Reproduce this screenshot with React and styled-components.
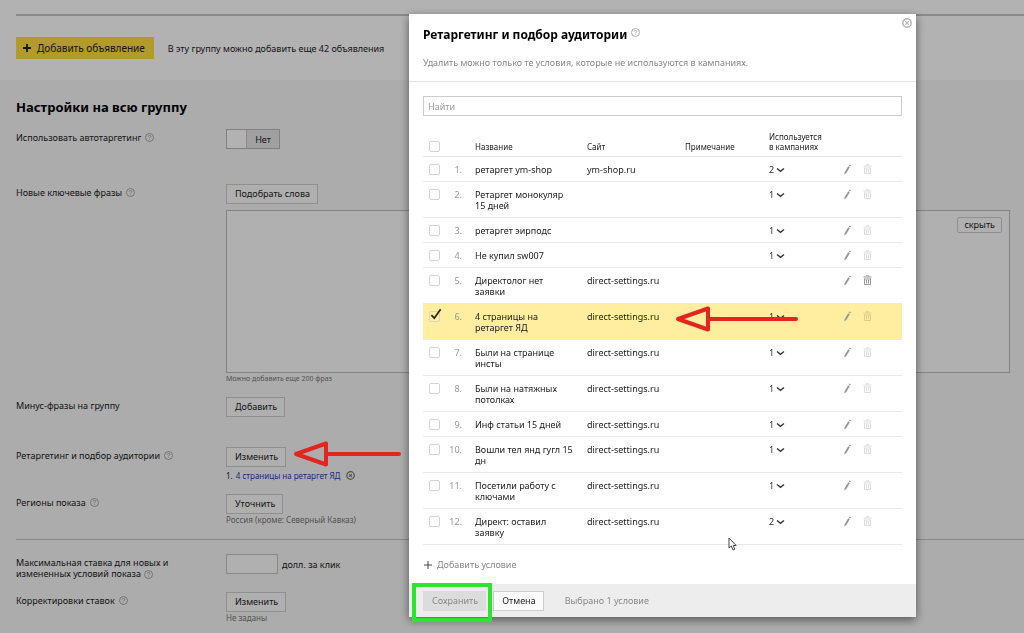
import React, { useState } from "react";
import styled, { createGlobalStyle, css } from "styled-components";

const GlobalStyle = createGlobalStyle`
  * {
    box-sizing: border-box;
  }

  body {
    margin: 0;
    background: #f6f6f6;
    color: #222;
    font-family: "Noto Sans", "Open Sans", sans-serif;
    font-size: 9px;
    line-height: 11px;
  }

  button, input, textarea {
    font: inherit;
    color: inherit;
  }
`;

/* page */

const Page = styled.main`
  min-height: 100vh;
  background: #f6f6f6;
`;

const TopBar = styled.section`
  height: 80px;
  padding: 14px 0 0 16px;
  background: #fff;
`;

const TopBarInner = styled.div`
  display: flex;
  align-items: center;
  gap: 14px;
  padding-top: 21px;
  border-top: 2px solid #c4c4c4;
`;

const AddBannerButton = styled.button`
  display: flex;
  align-items: center;
  gap: 5px;
  height: 22px;
  padding: 0 9px 0 6px;
  border: 0;
  background: #ffdd3e;
  font-size: 10px;
`;

const Section = styled.section`
  padding: 0 0 0 16px;
`;

const SectionTitle = styled.h2`
  margin: 0;
  padding: 17px 0 12px;
  color: #000;
  font-size: 13px;
  font-weight: 700;
  line-height: 20px;
`;

const Field = styled.div`
  display: grid;
  grid-template-columns: 210px 1fr;
  padding-right: 14px;
  min-height: ${({ $height }) => $height}px;
`;

const FieldLabel = styled.div`
  display: flex;
  align-items: flex-start;
  gap: 4px;
  padding-top: 3px;

  svg {
    margin-top: 1px;
  }
`;

const TwoLineLabel = styled.div`
  padding-top: 3px;

  svg {
    margin-left: 3px;
    vertical-align: middle;
  }
`;

const FieldBody = styled.div`
  display: flex;
  flex-direction: column;
  align-items: flex-start;
`;

const Inline = styled.div`
  display: flex;
  align-items: center;
  gap: 4px;
`;

const Button = styled.button`
  height: 20px;
  padding: 0 7px 0 8px;
  border: 1px solid #cdcdcd;
  background: #fbfbfb;
  line-height: 16px;
`;

const Toggle = styled.button`
  display: flex;
  align-items: center;
  height: 20px;
  padding: 0;
  border: 1px solid #b8b8b8;
  background: #e6e6e6;

  &::before {
    content: "";
    width: 19px;
    height: 18px;
    border-right: 1px solid #c8c8c8;
    background: #fff;
  }

  span {
    width: 32px;
    text-align: center;
  }
`;

const PhrasesBox = styled.div`
  position: relative;
  width: 100%;
  margin-top: 6px;
`;

const Phrases = styled.textarea`
  display: block;
  width: 100%;
  height: 163px;
  border: 1px solid #bcbcbc;
  background: #fcfcfc;
  resize: none;
`;

const HideButton = styled.button`
  position: absolute;
  top: 7px;
  right: 8px;
  height: 16px;
  padding: 0 6px;
  border: 1px solid #ccc;
  border-radius: 2px;
  background: #fcfcfc;
  line-height: 12px;
`;

const Hint = styled.div`
  color: #777;
  font-size: ${({ $small }) => ($small ? 7 : 8)}px;
`;

const Condition = styled.div`
  display: flex;
  align-items: center;
  gap: 3px;
  padding-top: 3px;
  font-size: 8px;

  a {
    color: #2c3fa8;
    text-decoration: none;
  }

  button {
    display: flex;
    margin-left: 3px;
    padding: 0;
    border: 0;
    background: none;
    color: #777;
  }
`;

const BidInput = styled.input`
  width: 52px;
  height: 20px;
  border: 1px solid #c4c4c4;
  background: #fcfcfc;
`;

const Divider = styled.hr`
  margin: 0 0 14px;
  border: 0;
  border-top: 1px solid #c4c4c4;
`;

/* dialog */

const Overlay = styled.div`
  position: fixed;
  inset: 0;
  display: flex;
  justify-content: flex-end;
  align-items: flex-start;
  padding: 14px 108px 0 0;
  background: rgba(0, 0, 0, 0.3);
`;

const Dialog = styled.div`
  position: relative;
  width: 507px;
  background: #fff;
  box-shadow: 0 3px 9px rgba(0, 0, 0, 0.5);
`;

const DialogHeader = styled.header`
  padding: 11px 14px 13px;
  border-bottom: 1px solid #e6e6e6;
`;

const DialogTitle = styled.h1`
  display: flex;
  align-items: flex-start;
  gap: 4px;
  margin: 0;
  color: #000;
  font-size: 12px;
  font-weight: 700;
  line-height: 20px;

  svg {
    margin-top: 3px;
  }
`;

const DialogNote = styled.p`
  margin: 12px 0 0;
  color: #888;
`;

const CloseButton = styled.button`
  position: absolute;
  top: 4px;
  right: 4px;
  display: flex;
  padding: 0;
  border: 0;
  background: none;
  color: #b4b4b4;
`;

const DialogBody = styled.div`
  padding: 14px 14px 0;
`;

const Search = styled.input`
  display: block;
  width: 100%;
  height: 20px;
  padding: 0 4px;
  border: 1px solid #ccc;

  &::placeholder {
    color: #999;
    opacity: 1;
  }
`;

const Table = styled.table`
  width: 100%;
  margin-top: 15px;
  border-collapse: separate;
  border-spacing: 0;
  table-layout: fixed;

  th {
    height: 26px;
    padding: 0 0 4px;
    border-bottom: 1px solid #e4e4e4;
    font-size: 8px;
    font-weight: 400;
    line-height: 10px;
    text-align: left;
    vertical-align: bottom;
  }

  td {
    padding: 7px 0 6px;
    border-bottom: 1px solid #e9e9e9;
    vertical-align: top;
  }
`;

const Col = styled.col`
  width: ${({ $width }) => ($width ? `${$width}px` : "auto")};
`;

const Row = styled.tr`
  ${({ $selected }) =>
    $selected &&
    css`
      background: #ffeda0;
    `}
`;

const NumberCell = styled.td`
  color: #999;
  text-align: right;
`;

const NameCell = styled.td`
  && {
    padding-left: 13px;
    padding-right: 12px;
  }
`;

const NameHead = styled.th`
  && {
    padding-left: 13px;
  }
`;

const Check = styled.label`
  position: relative;
  display: flex;
  width: 11px;
  height: 11px;
  margin-left: 6px;

  input {
    width: 11px;
    height: 11px;
    margin: 0;
    border: 1px solid #d4d4d4;
    border-radius: 2px;
    appearance: none;
  }

  svg {
    position: absolute;
    left: 1px;
    bottom: 1px;
    display: none;
  }

  input:checked + svg {
    display: block;
  }
`;

const IconButton = styled.button`
  display: flex;
  padding: 0;
  border: 0;
  background: none;
  color: #999;

  &:disabled {
    color: #dcdcdc;
    mix-blend-mode: multiply;
  }
`;

const UsedButton = styled(IconButton)`
  align-items: center;
  gap: 2px;
  color: #333;
`;

const AddCondition = styled.button`
  display: flex;
  align-items: center;
  gap: 4px;
  margin: 14px 0 14px;
  padding: 0;
  border: 0;
  background: none;
  color: #888;

  svg {
    color: #444;
  }
`;

const DialogFooter = styled.footer`
  display: flex;
  align-items: center;
  gap: 7px;
  height: 33px;
  padding: 0 14px;
  background: #ededed;
`;

const SaveButton = styled(Button)`
  border-color: #dcdcdc;
  background: #dcdcdc;
  color: #888;
`;

const Selected = styled.span`
  margin-left: 14px;
  color: #888;
`;

/* marks above the dialog */

const Marks = styled.div`
  position: fixed;
  inset: 0;
  pointer-events: none;
`;

const ArrowMark = styled.svg`
  position: absolute;
  ${({ $place }) => $place}
`;

const FrameMark = styled.div`
  position: absolute;
  top: 583px;
  right: 532px;
  width: 80px;
  height: 39px;
  border: 4px solid #2be52f;
`;

const Cursor = styled.svg`
  position: absolute;
  top: 537px;
  right: 287px;
`;

const HelpIcon = () => (
  <svg width="9" height="9" viewBox="0 0 9 9" fill="none" stroke="#999">
    <circle cx="4.5" cy="4.5" r="4" strokeWidth="0.8" />
    <path d="M3.2 3.6C3.2 2 5.8 2 5.8 3.5C5.8 4.4 4.5 4.3 4.5 5.3M4.5 6.1V6.8" strokeWidth="0.8" />
  </svg>
);

const CloseIcon = ({ size = 9 }) => (
  <svg width={size} height={size} viewBox="0 0 10 10" fill="none" stroke="currentColor">
    <circle cx="5" cy="5" r="4.2" strokeWidth="1.4" />
    <path d="M3.4 3.4L6.6 6.6M6.6 3.4L3.4 6.6" strokeWidth="1.2" />
  </svg>
);

const PlusIcon = ({ weight = 1 }) => (
  <svg width="10" height="10" viewBox="0 0 10 10" stroke="currentColor" strokeWidth={weight}>
    <path d="M5 1V9M1 5H9" />
  </svg>
);

const TickIcon = () => (
  <svg width="12" height="13" viewBox="0 0 12 13" fill="none" stroke="#2a2400">
    <path d="M1.4 7.2L4.3 10.2L10.6 1.2" strokeWidth="1.7" />
  </svg>
);

const ChevronIcon = () => (
  <svg width="9" height="6" viewBox="0 0 9 6" fill="none" stroke="currentColor">
    <path d="M1 1.5L4.5 4.3L8 1.5" strokeWidth="1.4" />
  </svg>
);

const PencilIcon = () => (
  <svg width="9" height="11" viewBox="0 0 9 11" fill="currentColor">
    <path d="M5.2 2.2L6.9 3.1L3.4 9.1L1.2 10.6L1.6 8.2ZM5.7 1.4L6.3.4L8.1 1.4L7.4 2.3Z" />
  </svg>
);

const TrashIcon = () => (
  <svg width="9" height="11" viewBox="0 0 9 11" fill="none" stroke="currentColor">
    <path d="M.5 2H8.5M3 .8H6M1.5 3.5V9.5H7.5V3.5M1.5 4H7.5" />
    <path d="M3.5 5V8.5M5.5 5V8.5" />
  </svg>
);

const Arrow = ({ length, place }) => (
  <ArrowMark
    $place={place}
    width={length}
    height="28"
    viewBox={`0 0 ${length} 28`}
    fill="none"
    stroke="#e3241f"
    strokeLinejoin="round"
    strokeLinecap="round"
  >
    <path d="M3 14L33 3.5V24.5Z" strokeWidth="4" />
    <path d={`M34 14H${length - 3}`} strokeWidth="4" />
  </ArrowMark>
);

const SITE = "direct-settings.ru";

const conditions = [
  { id: 1, name: "ретаргет ym-shop", site: "ym-shop.ru", used: 2 },
  { id: 2, name: "Ретаргет монокуляр 15 дней", used: 1 },
  { id: 3, name: "ретаргет эирподс", used: 1 },
  { id: 4, name: "Не купил sw007", used: 1 },
  { id: 5, name: "Директолог нет заявки", site: SITE, used: 0 },
  { id: 6, name: "4 страницы на ретаргет ЯД", site: SITE, used: 1 },
  { id: 7, name: "Были на странице инсты", site: SITE, used: 1 },
  { id: 8, name: "Были на натяжных потолках", site: SITE, used: 1 },
  { id: 9, name: "Инф статьи 15 дней", site: SITE, used: 1 },
  { id: 10, name: "Вошли тел янд гугл 15 дн", site: SITE, used: 1 },
  { id: 11, name: "Посетили работу с ключами", site: SITE, used: 1 },
  { id: 12, name: "Директ: оставил заявку", site: SITE, used: 2 },
];

const Checkbox = ({ label, checked, onChange }) => (
  <Check>
    <input type="checkbox" aria-label={label} checked={checked} onChange={onChange} />
    <TickIcon />
  </Check>
);

const GroupSettings = () => (
  <Page>
    <TopBar>
      <TopBarInner>
        <AddBannerButton>
          <PlusIcon weight={1.8} />
          Добавить объявление
        </AddBannerButton>
        <span>В эту группу можно добавить еще 42 объявления</span>
      </TopBarInner>
    </TopBar>
    <Section>
      <SectionTitle>Настройки на всю группу</SectionTitle>
      <Field $height={55}>
        <FieldLabel>
          Использовать автотаргетинг <HelpIcon />
        </FieldLabel>
        <FieldBody>
          <Toggle role="switch" aria-checked="false">
            <span>Нет</span>
          </Toggle>
        </FieldBody>
      </Field>
      <Field $height={213}>
        <FieldLabel>
          <label htmlFor="phrases">Новые ключевые фразы</label> <HelpIcon />
        </FieldLabel>
        <FieldBody>
          <Button>Подобрать слова</Button>
          <PhrasesBox>
            <Phrases id="phrases" />
            <HideButton>скрыть</HideButton>
          </PhrasesBox>
          <Hint $small>Можно добавить еще 200 фраз</Hint>
        </FieldBody>
      </Field>
      <Field $height={50}>
        <FieldLabel>Минус-фразы на группу</FieldLabel>
        <FieldBody>
          <Button>Добавить</Button>
        </FieldBody>
      </Field>
      <Field $height={47}>
        <FieldLabel>
          Ретаргетинг и подбор аудитории <HelpIcon />
        </FieldLabel>
        <FieldBody>
          <Button>Изменить</Button>
          <Condition>
            1. <a href="#condition">4 страницы на ретаргет ЯД</a>
            <button aria-label="Удалить условие">
              <CloseIcon />
            </button>
          </Condition>
        </FieldBody>
      </Field>
      <Field $height={45}>
        <FieldLabel>
          Регионы показа <HelpIcon />
        </FieldLabel>
        <FieldBody>
          <Button>Уточнить</Button>
          <Hint>Россия (кроме: Северный Кавказ)</Hint>
        </FieldBody>
      </Field>
      <Divider />
      <Field $height={38}>
        <TwoLineLabel>
          <label htmlFor="bid">
            Максимальная ставка для новых и<br />
            измененных условий показа
          </label>
          <HelpIcon />
        </TwoLineLabel>
        <FieldBody>
          <Inline>
            <BidInput id="bid" />
            долл. за клик
          </Inline>
        </FieldBody>
      </Field>
      <Field $height={40}>
        <FieldLabel>
          Корректировки ставок <HelpIcon />
        </FieldLabel>
        <FieldBody>
          <Button>Изменить</Button>
          <Hint>Не заданы</Hint>
        </FieldBody>
      </Field>
    </Section>
  </Page>
);

const RetargetingDialog = () => {
  const [selected, setSelected] = useState([6]);

  const toggle = (id) =>
    setSelected((prev) => (prev.includes(id) ? prev.filter((item) => item !== id) : [...prev, id]));

  const toggleAll = () =>
    setSelected((prev) => (prev.length === conditions.length ? [] : conditions.map(({ id }) => id)));

  return (
    <Dialog role="dialog" aria-labelledby="dialog-title">
      <DialogHeader>
        <DialogTitle id="dialog-title">
          Ретаргетинг и подбор аудитории <HelpIcon />
        </DialogTitle>
        <DialogNote>Удалить можно только те условия, которые не используются в кампаниях.</DialogNote>
        <CloseButton aria-label="Закрыть">
          <CloseIcon size={10} />
        </CloseButton>
      </DialogHeader>
      <DialogBody>
        <Search type="text" placeholder="Найти" aria-label="Найти" />
        <Table>
          <colgroup>
            <Col $width={20} />
            <Col $width={19} />
            <Col $width={125} />
            <Col $width={98} />
            <Col $width={84} />
            <Col $width={74} />
            <Col $width={20} />
            <Col />
          </colgroup>
          <thead>
            <tr>
              <th>
                <Checkbox
                  label="Выбрать все"
                  checked={selected.length === conditions.length}
                  onChange={toggleAll}
                />
              </th>
              <th />
              <NameHead>Название</NameHead>
              <th>Сайт</th>
              <th>Примечание</th>
              <th>
                Используется
                <br />в кампаниях
              </th>
              <th />
              <th />
            </tr>
          </thead>
          <tbody>
            {conditions.map(({ id, name, site, used }) => (
              <Row key={id} $selected={selected.includes(id)}>
                <td>
                  <Checkbox label={name} checked={selected.includes(id)} onChange={() => toggle(id)} />
                </td>
                <NumberCell>{id}.</NumberCell>
                <NameCell>{name}</NameCell>
                <td>{site}</td>
                <td />
                <td>
                  {used > 0 && (
                    <UsedButton>
                      {used}
                      <ChevronIcon />
                    </UsedButton>
                  )}
                </td>
                <td>
                  <IconButton aria-label="Изменить">
                    <PencilIcon />
                  </IconButton>
                </td>
                <td>
                  <IconButton aria-label="Удалить" disabled={used > 0}>
                    <TrashIcon />
                  </IconButton>
                </td>
              </Row>
            ))}
          </tbody>
        </Table>
        <AddCondition>
          <PlusIcon />
          Добавить условие
        </AddCondition>
      </DialogBody>
      <DialogFooter>
        <SaveButton>Сохранить</SaveButton>
        <Button>Отмена</Button>
        <Selected>Выбрано {selected.length} условие</Selected>
      </DialogFooter>
    </Dialog>
  );
};

const App = () => (
  <>
    <GlobalStyle />
    <GroupSettings />
    <Overlay>
      <RetargetingDialog />
    </Overlay>
    <Marks>
      <Arrow length={109} place="top: 440px; left: 293px;" />
      <Arrow length={124} place="top: 305px; right: 225px;" />
      <FrameMark />
      <Cursor width="9" height="14" viewBox="0 0 9 14" fill="#fff" stroke="#444">
        <path d="M1 1V11L3.3 9L5 13L6.8 12.2L5.2 8.5H8.2Z" />
      </Cursor>
    </Marks>
  </>
);

export default App;
